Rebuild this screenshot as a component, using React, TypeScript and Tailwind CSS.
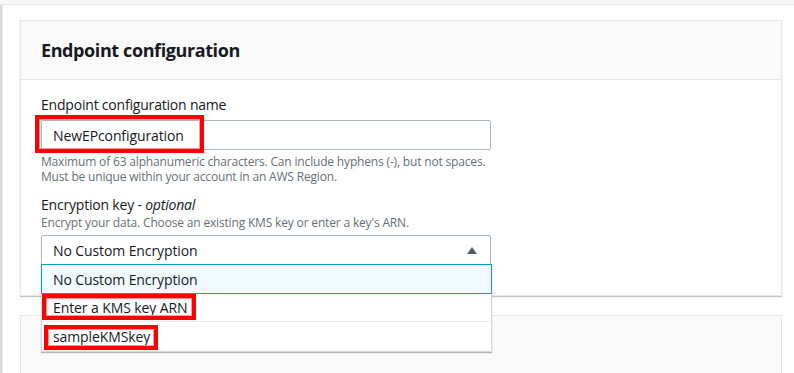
import React from "react";

const options = ["No Custom Encryption", "Enter a KMS key ARN", "sampleKMSkey"];

function RedMark({ className }: { className: string }) {
  // annotation box drawn over the screenshot
  return (
    <span
      className={`pointer-events-none absolute border-4 border-[#ff0000] shadow-[inset_0_0_0_1px_#ff9a9a] ${className}`}
    />
  );
}

export default function App() {
  return (
    <div className="relative w-[794px] h-[373px] overflow-hidden bg-white font-['Open_Sans',sans-serif] text-[#16191f]">
      {/* top strip */}
      <div className="h-[5px] bg-[#f7f7f7] border-b border-[#e6e8e8]" />

      <div className="flex h-full">
        {/* left rail */}
        <div className="w-[3px] bg-[#d5dbdb] border-r border-[#eef0f0]" />

        <div className="flex-1 pl-[17px] pr-[12px] pt-[15px] flex flex-col gap-[19px]">
          {/* CARD 1 */}
          <section className="border border-[#e4e7e7] shadow-[0_1px_1px_rgba(0,28,36,0.25)] bg-white">
            <div className="h-[59px] bg-[#fafafa] border-b border-[#e4e7e7] flex items-center px-[20px]">
              <h2 className="text-[18px] font-bold tracking-[-0.4px] pt-[1px]">Endpoint configuration</h2>
            </div>

            <div className="px-[20px] pt-[15px] pb-[30px]">
              <label className="block text-[14px] leading-[20px] tracking-[-0.2px]">Endpoint configuration name</label>

              <div className="relative mt-[5px] w-[450px]">
                <div className="h-[30px] border border-[#aab7b8] rounded-[2px] flex items-center pl-[11px] text-[14px] tracking-[-0.1px]">
                  NewEPconfiguration
                </div>
                <RedMark className="-left-[6px] -top-[5px] w-[169px] h-[38px]" />
              </div>

              <p className="mt-[4px] text-[12px] leading-[15px] tracking-[-0.17px] text-[#687078]">
                Maximum of 63 alphanumeric characters. Can include hyphens (-), but not spaces.
                <br />
                Must be unique within your account in an AWS Region.
              </p>

              <label className="block mt-[11px] text-[14px] leading-[20px] tracking-[-0.2px]">
                Encryption key - <i>optional</i>
              </label>
              <p className="text-[12px] leading-[15px] tracking-[-0.17px] text-[#687078]">
                Encrypt your data. Choose an existing KMS key or enter a key's ARN.
              </p>

              {/* SELECT */}
              <div className="relative mt-[5px] w-[450px] z-10">
                <div className="h-[30px] border border-[#aab7b8] rounded-t-[2px] flex items-center justify-between pl-[11px] pr-[13px] text-[14px] tracking-[-0.1px]">
                  <span>No Custom Encryption</span>
                  <svg width="10" height="7" viewBox="0 0 10 7">
                    <path d="M5 0 L10 7 L0 7 Z" fill="#545b64" />
                  </svg>
                </div>

                {/* DROPDOWN */}
                <ul className="absolute left-0 top-[29px] w-[451px] bg-white border border-[#d5dbdb] shadow-[0_1px_1px_rgba(0,28,36,0.3)] text-[14px] tracking-[-0.1px]">
                  <li className="h-[30px] flex items-center pl-[11px] bg-[#f1faff] border border-[#00a1c9] -m-px">
                    {options[0]}
                  </li>
                  <li className="relative h-[29px] flex items-center pl-[11px] border-b border-[#eaeded]">
                    {options[1]}
                    <RedMark className="left-0 top-[1px] w-[154px] h-[26px]" />
                  </li>
                  <li className="relative h-[29px] flex items-center pl-[11px]">
                    {options[2]}
                    <RedMark className="left-[2px] top-[3px] w-[114px] h-[25px]" />
                  </li>
                </ul>
              </div>
            </div>
          </section>

          {/* CARD 2 (behind the dropdown) */}
          <section className="border border-[#e4e7e7] bg-white h-[120px]">
            <div className="h-[59px] bg-[#fafafa]" />
          </section>
        </div>
      </div>
    </div>
  );
}
